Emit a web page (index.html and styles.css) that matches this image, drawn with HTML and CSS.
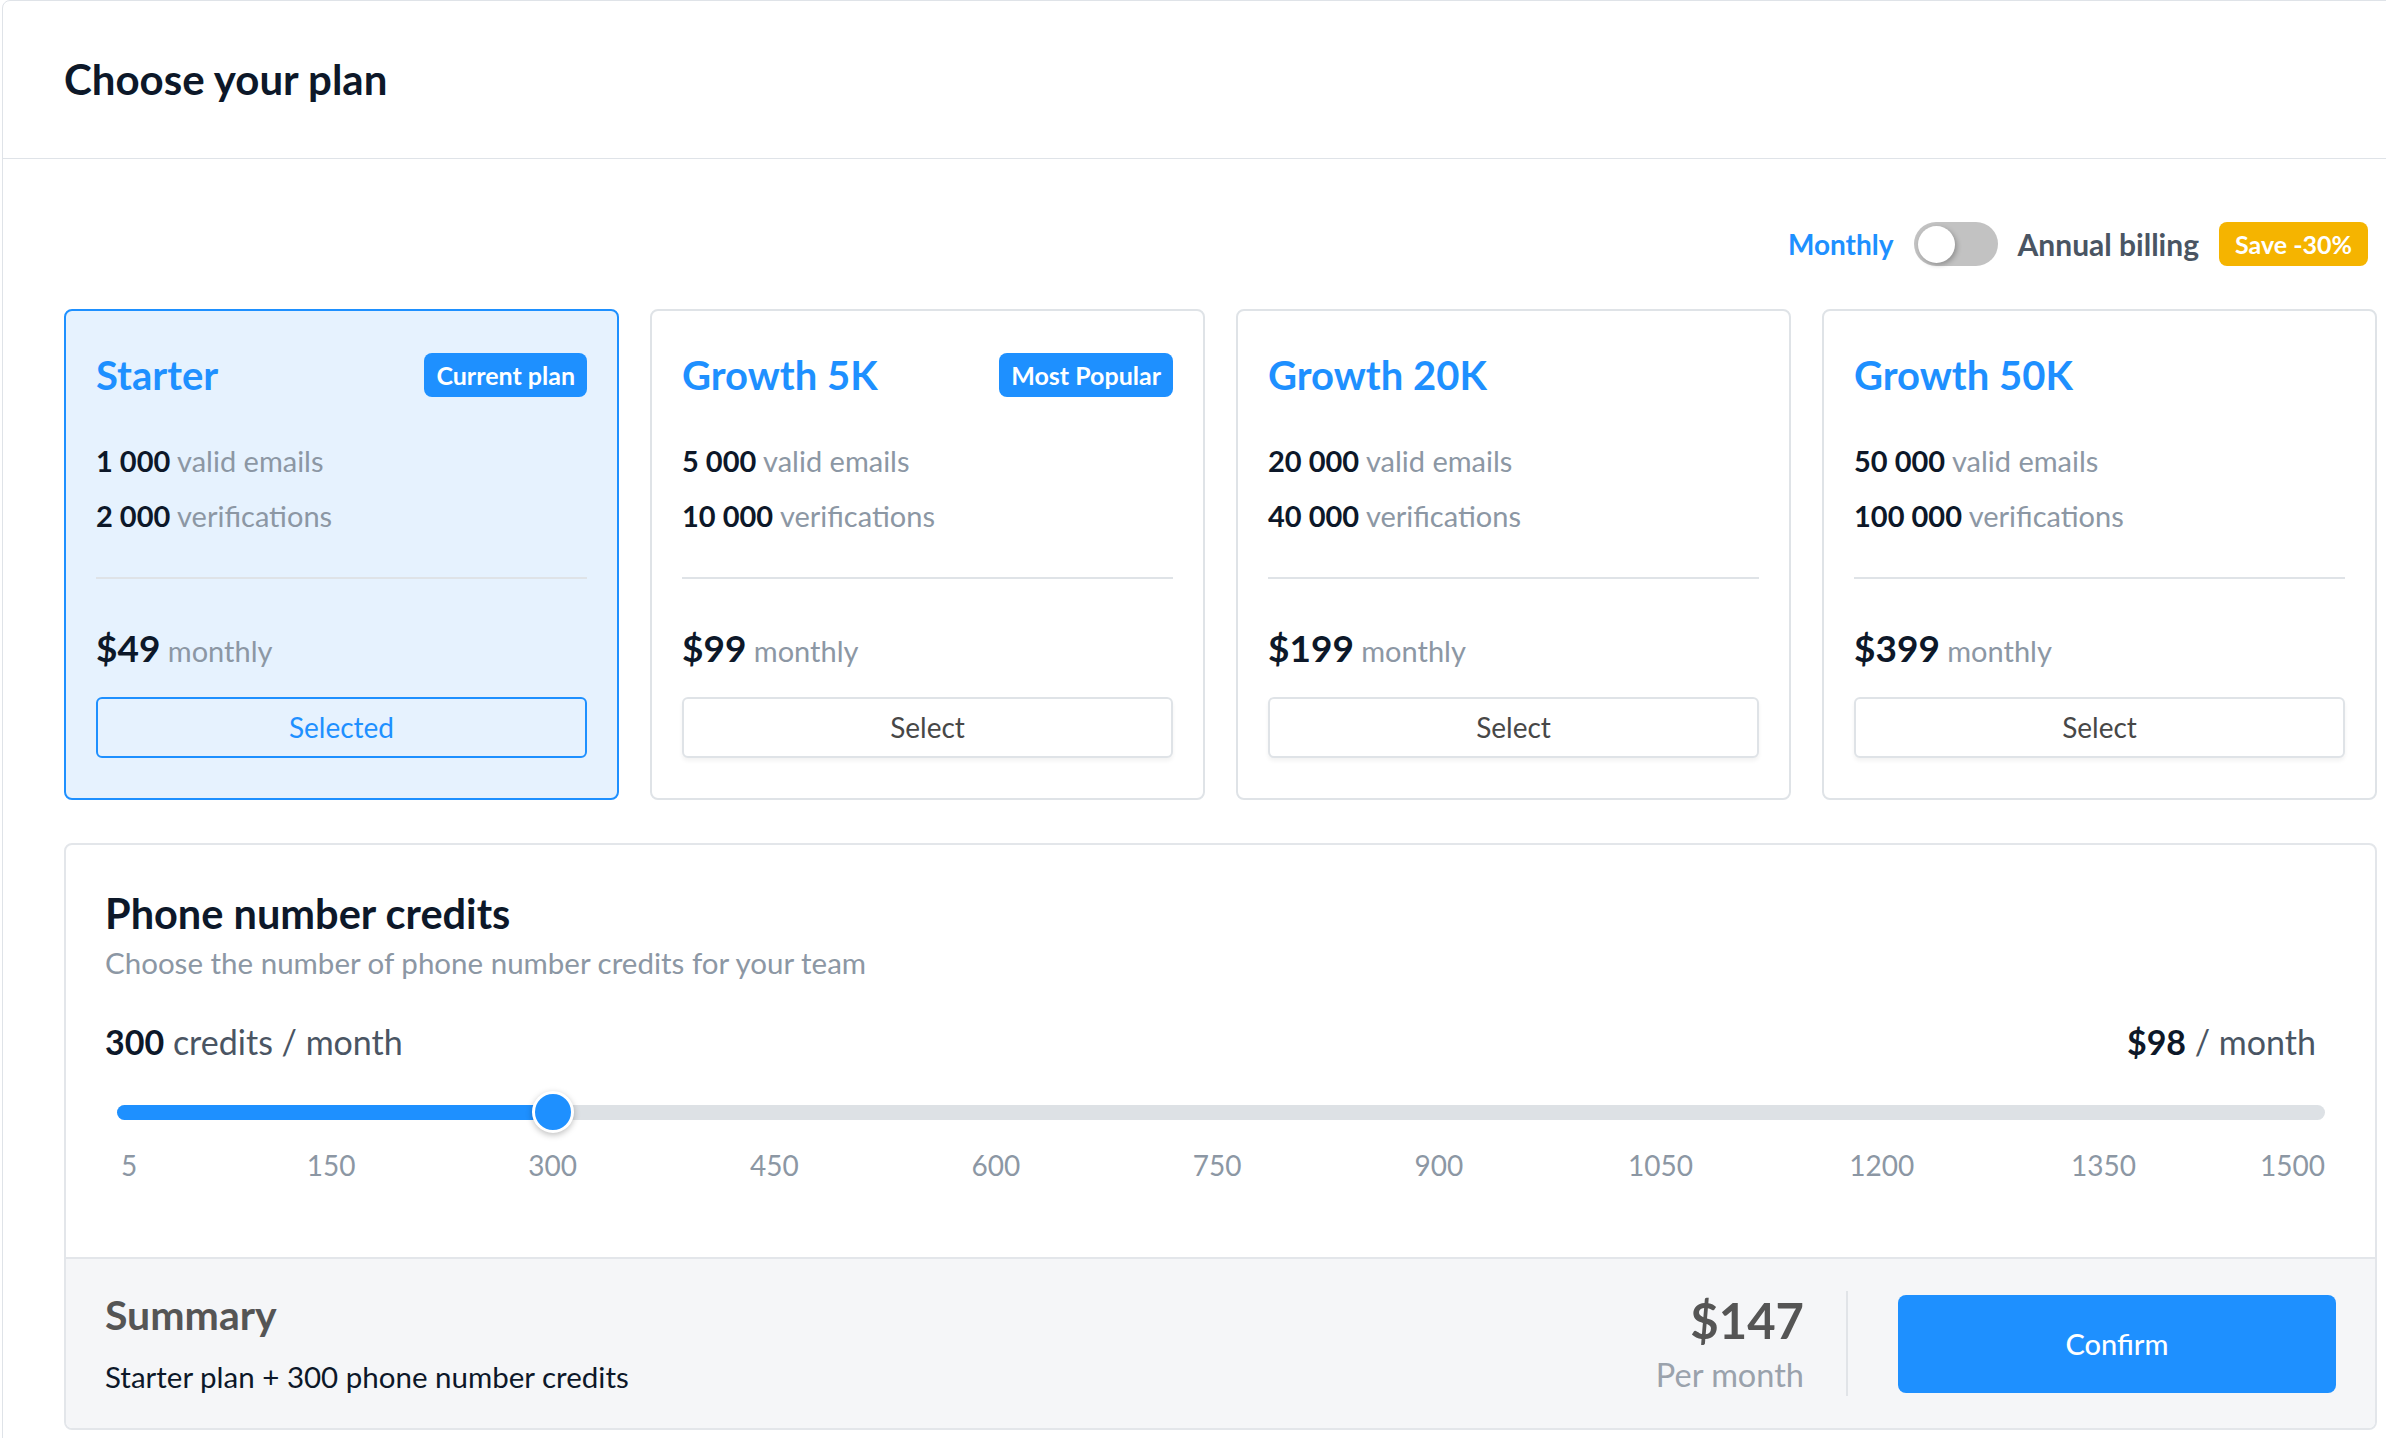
FILE: index.html
```html
<!DOCTYPE html>
<html>
<head>
    <meta charset="utf-8">
    <title>Choose your plan</title>
    <link rel="stylesheet" href="styles.css">
</head>
<body>

<div class="plan-panel">

    <div class="plan-header">Choose your plan</div>

    <div class="plan-body">

        <!--账单周期切换-->
        <div class="billing">
            <span class="billing-monthly">Monthly</span>
            <span class="switch"><span class="switch-knob"></span></span>
            <span class="billing-annual">Annual billing</span>
            <span class="billing-save">Save -30%</span>
        </div>

        <!--套餐卡片-->
        <div class="plans">
            <div class="plan plan-current">
                <div class="plan-head">
                    <span class="plan-name">Starter</span>
                    <span class="plan-badge">Current plan</span>
                </div>
                <ul class="plan-features">
                    <li><b>1 000</b> valid emails</li>
                    <li><b>2 000</b> verifications</li>
                </ul>
                <div class="plan-price"><b>$49</b> monthly</div>
                <a href="#" class="plan-btn plan-btn-selected">Selected</a>
            </div>

            <div class="plan">
                <div class="plan-head">
                    <span class="plan-name">Growth 5K</span>
                    <span class="plan-badge">Most Popular</span>
                </div>
                <ul class="plan-features">
                    <li><b>5 000</b> valid emails</li>
                    <li><b>10 000</b> verifications</li>
                </ul>
                <div class="plan-price"><b>$99</b> monthly</div>
                <a href="#" class="plan-btn">Select</a>
            </div>

            <div class="plan">
                <div class="plan-head">
                    <span class="plan-name">Growth 20K</span>
                </div>
                <ul class="plan-features">
                    <li><b>20 000</b> valid emails</li>
                    <li><b>40 000</b> verifications</li>
                </ul>
                <div class="plan-price"><b>$199</b> monthly</div>
                <a href="#" class="plan-btn">Select</a>
            </div>

            <div class="plan">
                <div class="plan-head">
                    <span class="plan-name">Growth 50K</span>
                </div>
                <ul class="plan-features">
                    <li><b>50 000</b> valid emails</li>
                    <li><b>100 000</b> verifications</li>
                </ul>
                <div class="plan-price"><b>$399</b> monthly</div>
                <a href="#" class="plan-btn">Select</a>
            </div>
        </div>

        <!--电话号码额度-->
        <div class="credits">
            <div class="credits-main">
                <h2 class="credits-title">Phone number credits</h2>
                <p class="credits-desc">Choose the number of phone number credits for your team</p>

                <div class="credits-row">
                    <div><b>300</b> credits / month</div>
                    <div><b>$98</b> / month</div>
                </div>

                <div class="slider">
                    <div class="slider-fill" style="width: 19.73%"></div>
                    <div class="slider-thumb" style="left: 19.73%"></div>
                </div>
                <div class="slider-ticks">
                    <span class="tick tick-first" style="left: 0%">5</span>
                    <span class="tick" style="left: 9.70%">150</span>
                    <span class="tick" style="left: 19.73%">300</span>
                    <span class="tick" style="left: 29.77%">450</span>
                    <span class="tick" style="left: 39.80%">600</span>
                    <span class="tick" style="left: 49.83%">750</span>
                    <span class="tick" style="left: 59.87%">900</span>
                    <span class="tick" style="left: 69.90%">1050</span>
                    <span class="tick" style="left: 79.93%">1200</span>
                    <span class="tick" style="left: 89.97%">1350</span>
                    <span class="tick tick-last" style="left: 100%">1500</span>
                </div>
            </div>

            <div class="summary">
                <div class="summary-info">
                    <div class="summary-title">Summary</div>
                    <div class="summary-text">Starter plan + 300 phone number credits</div>
                </div>
                <div class="summary-total">
                    <div class="summary-price">$147</div>
                    <div class="summary-per">Per month</div>
                </div>
                <div class="summary-sep"></div>
                <a href="#" class="summary-confirm">Confirm</a>
            </div>
        </div>

    </div>
</div>

</body>
</html>
```

FILE: styles.css
```css
body{
    margin: 0;padding: 0;
    overflow: hidden;background: #fff;
    font-family: "Lato", "Liberation Sans", sans-serif;
    color: #0d1829;
}
a{text-decoration: none;}

/*外层面板*/
.plan-panel{
    width: 2440px;min-height: 1480px;
    margin-left: 2px;
    border: 1px solid #dfe3e8;border-radius: 8px;
    box-sizing: border-box;
}
.plan-header{
    height: 157px;line-height: 157px;
    padding-left: 61px;
    border-bottom: 1px solid #dfe3e8;
    font-size: 42px;font-weight: 700;color: #0d1829;
}
.plan-body{
    width: 2313px;
    padding: 63px 0 0 61px;
}

/*账单切换*/
.billing{
    display: flex;justify-content: flex-end;align-items: center;gap: 20px;
    height: 44px;margin-right: 9px;
}
.billing-monthly{
    font-size: 28px;font-weight: 700;color: #1e90ff;
}
.switch{
    width: 84px;height: 44px;border-radius: 22px;
    background: #c2c2c2;
    display: flex;align-items: center;
    padding-left: 4px;box-sizing: border-box;
}
.switch-knob{
    width: 37px;height: 37px;border-radius: 50%;
    background: #fff;
    box-shadow: 2px 2px 5px rgba(0,0,0,0.25);
}
.billing-annual{
    font-size: 30px;font-weight: 700;color: #4a5563;
}
.billing-save{
    height: 44px;line-height: 44px;padding: 0 16px;
    border-radius: 8px;background: #f5b400;
    font-size: 25px;font-weight: 700;color: #fff;
}

/*套餐卡片*/
.plans{
    display: grid;grid-template-columns: repeat(4, 1fr);gap: 31px;
    margin-top: 43px;
}
.plan{
    border: 2px solid #dfe3e7;border-radius: 8px;
    padding: 42px 30px 40px;
    background: #fff;
}
.plan-current{
    border-color: #1e90ff;background: #e6f2fe;
}
.plan-head{
    height: 44px;
    display: flex;justify-content: space-between;align-items: center;
}
.plan-name{
    font-size: 40px;font-weight: 700;color: #1e90ff;
}
.plan-badge{
    height: 44px;line-height: 44px;padding: 0 12px;
    border-radius: 8px;background: #1e90ff;
    font-size: 25px;font-weight: 700;color: #fff;
}
.plan-features{
    list-style: none;margin: 36px 0 0;padding: 0 0 34px;
    border-bottom: 2px solid #dfe3e7;
}
.plan-features li{
    line-height: 55px;font-size: 29px;color: #8c97a4;
}
.plan-features b{color: #0d1829;font-weight: 700;}
.plan-price{
    margin-top: 44px;line-height: 50px;
    font-size: 29px;color: #8c97a4;
}
.plan-price b{font-size: 37px;color: #0d1829;}
.plan-btn{
    display: block;height: 61px;line-height: 57px;margin-top: 21px;
    box-sizing: border-box;
    border: 2px solid #dfe3e7;border-radius: 6px;background: #fff;
    box-shadow: 0 3px 4px rgba(0,0,0,0.05);
    text-align: center;font-size: 28px;color: #474747;
}
.plan-btn-selected{
    border-color: #1e90ff;background: transparent;color: #1e90ff;
    box-shadow: none;
}

/*电话号码额度*/
.credits{
    margin-top: 43px;
    border: 2px solid #e3e6ea;border-radius: 8px;
    overflow: hidden;
}
.credits-main{
    padding: 43px 59px 74px 39px;
}
.credits-title{
    margin: 0;line-height: 50px;
    font-size: 41.5px;font-weight: 700;color: #0d1829;
}
.credits-desc{
    margin: 5px 0 0;line-height: 40px;
    font-size: 29.5px;color: #8c97a4;
}
.credits-row{
    display: flex;justify-content: space-between;
    margin-top: 34px;line-height: 50px;
    font-size: 34px;color: #4a5563;
}
.credits-row b{color: #0d1829;font-weight: 700;}

/*滑块*/
.slider{
    position: relative;height: 44px;
    margin: 23px -9px 0 12px;
}
.slider:before{
    content: "";position: absolute;left: 0;right: 0;top: 15px;
    height: 15px;border-radius: 8px;background: #dde1e5;
}
.slider-fill{
    position: absolute;left: 0;top: 15px;
    height: 15px;border-radius: 8px 0 0 8px;background: #1e90ff;
}
.slider-thumb{
    position: absolute;top: 50%;
    width: 36px;height: 36px;border-radius: 50%;
    background: #1e90ff;border: 3px solid #fff;
    box-shadow: 0 2px 6px rgba(0,0,0,0.25);
    transform: translate(-50%, -50%);
}
.slider-ticks{
    position: relative;height: 36px;
    margin: 13px -9px 0 12px;
}
.tick{
    position: absolute;top: 0;
    line-height: 36px;font-size: 28px;color: #8c97a4;
    transform: translateX(-50%);
}
.tick-first{transform: none;margin-left: 4px;}
.tick-last{transform: translateX(-100%);}

/*汇总*/
.summary{
    display: flex;align-items: center;
    height: 169px;padding: 0 39px;
    border-top: 2px solid #e3e6ea;background: #f5f6f8;
}
.summary-info{flex: 1;}
.summary-title{
    line-height: 50px;font-size: 41px;font-weight: 700;color: #555;
}
.summary-text{
    margin-top: 17px;line-height: 40px;
    font-size: 29.5px;color: #0d1829;
}
.summary-total{text-align: right;}
.summary-price{
    line-height: 56px;font-size: 49px;font-weight: 700;color: #555;
}
.summary-per{
    margin-top: 7px;line-height: 40px;
    font-size: 32.5px;color: #9aa2ac;
}
.summary-sep{
    width: 2px;height: 105px;background: #e1e4e8;
    margin: 0 50px 0 42px;
}
.summary-confirm{
    width: 438px;height: 98px;line-height: 98px;
    border-radius: 8px;background: #1e90ff;
    text-align: center;font-size: 29px;font-weight: 500;color: #fff;
}
```
